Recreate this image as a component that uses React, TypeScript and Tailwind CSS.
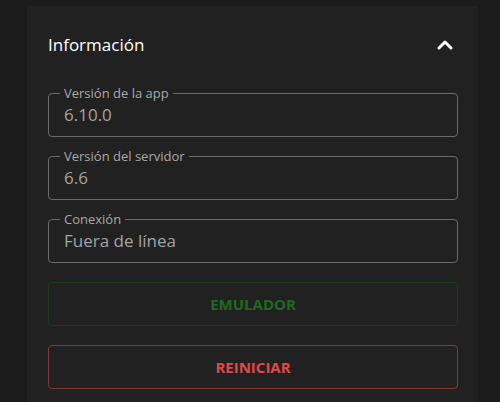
import { FiChevronUp } from 'react-icons/fi';

type Field = { label: string; value: string };

const fields: Field[] = [
    { label: 'Versión de la app', value: '6.10.0' },
    { label: 'Versión del servidor', value: '6.6' },
    { label: 'Conexión', value: 'Fuera de línea' },
];

const InfoField: React.FC<Field> = ({ label, value }) => (
    <div className="relative flex h-[44px] items-center rounded-[4px] border border-[#6b6b6b] px-[15px]">
        <span className="absolute -top-[9px] left-[11px] bg-[#212121] px-[4px] text-[13px] leading-[16px] text-[#a9a9a9]">
            {label}
        </span>
        <span className="text-[17px] leading-[22px] text-[#a3a3a3]">{value}</span>
    </div>
);

const App: React.FC = () => {
    return (
        <div
            className="h-[402px] w-[500px] overflow-hidden bg-[#1b1b1b] pt-[6px] select-none"
            style={{ fontFamily: '"Open Sans", "Noto Sans", sans-serif' }}
        >
            <div className="ml-[27px] h-[420px] w-[451px] bg-[#212121] pl-[21px] pr-[20px] pt-[26px]">
                <div className="flex items-center justify-between pr-[1px]">
                    <span className="text-[17px] leading-[26px] text-white">Información</span>
                    <FiChevronUp className="text-[24px] text-white" strokeWidth={3} />
                </div>
                <div className="mt-[35px] flex flex-col gap-[19px]">
                    {fields.map((f) => (
                        <InfoField key={f.label} {...f} />
                    ))}
                    <button className="h-[44px] rounded-[4px] border border-[#1f3b1f] text-[15px] font-bold text-[#1e6a1e]">
                        EMULADOR
                    </button>
                    <button className="h-[44px] rounded-[4px] border border-[#7d3a3a] text-[15px] font-bold text-[#e2484a]">
                        REINICIAR
                    </button>
                </div>
            </div>
        </div>
    );
};

export default App;
